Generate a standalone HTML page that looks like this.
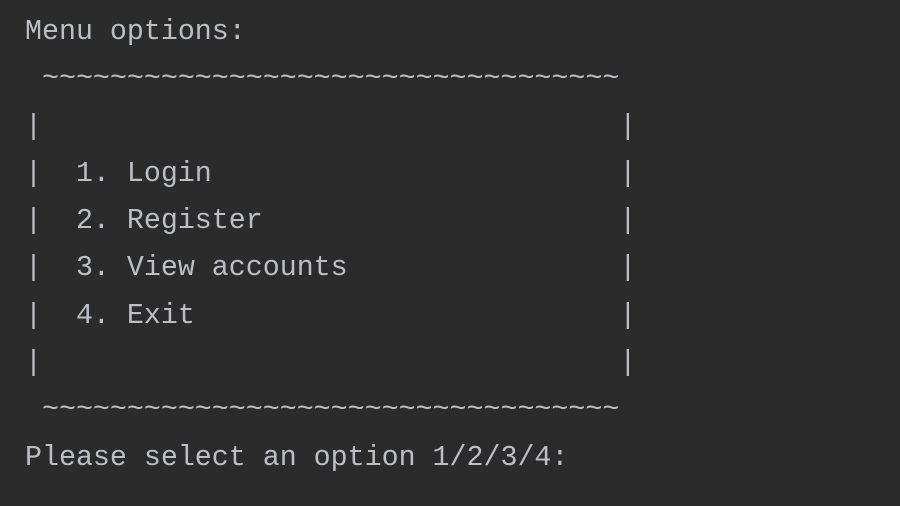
<!DOCTYPE html>
<html><head><style>
html,body{margin:0;padding:0;background:#2b2b2b;width:900px;height:506px;overflow:hidden}
pre{margin:0;position:absolute;left:25px;top:9px;font-family:"Liberation Mono",monospace;font-size:28.3px;line-height:47.3px;color:#bcbec4}
</style></head><body>
<pre>Menu options:
 ~~~~~~~~~~~~~~~~~~~~~~~~~~~~~~~~~~
|                                  |
|  1. Login                        |
|  2. Register                     |
|  3. View accounts                |
|  4. Exit                         |
|                                  |
 ~~~~~~~~~~~~~~~~~~~~~~~~~~~~~~~~~~
Please select an option 1/2/3/4:</pre>
</body></html>
